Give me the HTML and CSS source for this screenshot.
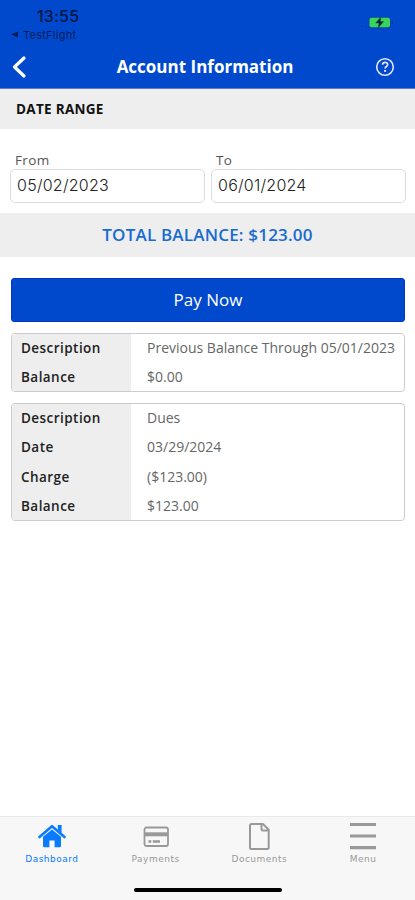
FILE: index.html
```html
<!DOCTYPE html>
<html lang="en">
<head>
<meta charset="utf-8">
<title>Account Information</title>
<link rel="stylesheet" href="styles.css">
</head>
<body>
<div class="app">
  <header class="header">
    <div class="status">
      <div class="status-left">
        <div class="clock">13:55</div>
        <div class="return-app"><svg width="7" height="7" viewBox="0 0 7 7"><path d="M0 3.500 7 .4v6.200z" fill="currentColor"/></svg><span>TestFlight</span></div>
      </div>
      <div class="status-right">
        <span class="signal"><i></i><i></i><i></i><i></i></span>
        <svg class="battery" width="26" height="13" viewBox="0 0 26 13"><rect x=".7" y=".7" width="22" height="11.400" rx="3.500" fill="none" stroke="#0647a5"/><rect x="1.500" y="1.700" width="20.500" height="9.500" rx="2" fill="#38d45c"/><path d="M24 4.500c1.700.5 1.700 3.500 0 4z" fill="#0638a0"/><path d="M12.800 1 7.700 7.100h3.300l-.8 4.900 5.400-6.500h-3.300z" fill="#001a40" stroke="#07652f" stroke-width=".5"/></svg>
      </div>
    </div>
    <div class="nav">
      <svg class="back" width="16" height="24" viewBox="0 0 16 24"><path d="M13 3 3.500 12l9.500 9" fill="none" stroke="#fff" stroke-width="3.200" stroke-linecap="round" stroke-linejoin="round"/></svg>
      <h1>Account Information</h1>
      <svg class="help" width="20" height="20" viewBox="0 0 20 20"><circle cx="10" cy="10" r="8.300" fill="none" stroke="#e2e6ff" stroke-width="1.600"/><path d="M7.500 7.700c.2-3.200 5.300-3 5.200-.1 0 1.900-2.600 1.900-2.600 4" fill="none" stroke="#e2e6ff" stroke-width="1.700"/><circle cx="10.100" cy="13.900" r="1.100" fill="#e2e6ff"/></svg>
    </div>
  </header>
  <main>
    <h2 class="section"><span>DATE RANGE</span></h2>
    <div class="dates">
      <div class="field"><div class="label">From</div><div class="input">05/02/2023</div></div>
      <div class="field"><div class="label">To</div><div class="input">06/01/2024</div></div>
    </div>
    <div class="total"><span>TOTAL BALANCE: $123.00</span></div>
    <div class="content">
      <div class="pay" role="button"><span>Pay Now</span></div>
      <dl class="card short">
        <dt>Description</dt><dd>Previous Balance Through 05/01/2023</dd>
        <dt>Balance</dt><dd>$0.00</dd>
      </dl>
      <dl class="card long">
        <dt>Description</dt><dd>Dues</dd>
        <dt>Date</dt><dd>03/29/2024</dd>
        <dt>Charge</dt><dd>($123.00)</dd>
        <dt>Balance</dt><dd>$123.00</dd>
      </dl>
    </div>
  </main>
  <footer class="tabs">
    <nav>
      <div class="tab active"><svg width="28" height="30" viewBox="0 0 28 30"><path d="M1.500 16 14 5.200 26.500 16" fill="none" stroke="currentColor" stroke-width="2.600" stroke-linecap="round" stroke-linejoin="round"/><path d="M19.800 4h3.800v8l-3.800-3.300zM5 15.800l9-7.200 9 7.200V25q0 1.200-1.200 1.200h-5.200v-6.700h-5.200v6.700H6.200Q5 26.200 5 25z" fill="currentColor"/></svg><span>Dashboard</span></div>
      <div class="tab"><svg width="28" height="30" viewBox="0 0 28 30"><rect x="2.500" y="6.500" width="23.500" height="18.500" rx="2" fill="none" stroke="currentColor" stroke-width="1.800"/><path d="M2 11.300h24v4H2z" fill="currentColor"/><path d="M6.500 20.500h2.800m1.500 0h7.200" fill="none" stroke="currentColor" stroke-width="2.400"/></svg><span>Payments</span></div>
      <div class="tab"><svg width="28" height="30" viewBox="0 0 28 30"><path d="M6.500 3H18l5.700 5.700V26.500q0 1.500-1.500 1.500H6.500Q5 28 5 26.500v-22Q5 3 6.500 3zM16.500 3v5q0 1.500 1.500 1.500h5.500" fill="none" stroke="currentColor" stroke-width="2" stroke-linejoin="round"/></svg><span>Documents</span></div>
      <div class="tab"><svg width="28" height="30" viewBox="0 0 28 30"><path d="M1 3.500h26M1 15h26M1 26.700h26" fill="none" stroke="currentColor" stroke-width="3.200"/></svg><span>Menu</span></div>
    </nav>
    <div class="home-bar"></div>
  </footer>
</div>
</body>
</html>
```

FILE: styles.css
```css
* { box-sizing: border-box; margin: 0; padding: 0; }
body { background: #fff; font-family: "Open Sans", sans-serif; }
svg { display: block; flex: none; }
.app { display: flex; flex-direction: column; height: 900px; width: 415px; overflow: hidden; }
.header { height: 89px; background: #0049cd; border-bottom: 1px solid #5b78cf; }
.status { height: 46px; display: flex; justify-content: space-between; padding: 7px 21px 0 11px; }
.clock { font: 500 16px/18px Inter, sans-serif; padding-left: 26px; color: #001643; letter-spacing: .2px; }
.return-app { display: flex; align-items: center; gap: 5px; height: 19px; font: 11px/18px Inter, sans-serif; letter-spacing: .25px; color: #001d60; }
.status-right { display: flex; gap: 5px; padding-top: 9px; }
.signal { display: flex; gap: 3px; padding-top: 9px; }
.signal i { width: 2px; height: 2px; border-radius: 1px; background: #0a3ba4; }
.nav { height: 42px; display: flex; align-items: center; justify-content: space-between; padding: 0 20px 0 11px; }
.nav h1 { font-size: 17px; line-height: 24px; color: #fff; margin-left: 8px; }
.section { height: 40px; padding-left: 16px; background: #eee; font-size: 13.500px; line-height: 40px; color: #111; letter-spacing: .3px; }
.dates { height: 84px; padding: 21px 9px 0 10px; display: grid; grid-template-columns: 195px 195px; gap: 6px; }
.label { height: 19px; padding-left: 5px; font-size: 13.500px; line-height: 20px; color: #555; letter-spacing: .35px; }
.input { height: 34px; padding-left: 6px; border: 1.500px solid #ddd; border-radius: 5px; font: 300 16px/31px Inter, sans-serif; color: #222; letter-spacing: .25px; }
.total { height: 44px; background: #eee; text-align: center; font-size: 17px; font-weight: 600; line-height: 44px; color: #186bd0; letter-spacing: .2px; }
.content { padding: 21px 10px 0 11px; display: flex; flex-direction: column; gap: 11px; }
.pay { height: 44px; border: 1px solid #0537c7; border-radius: 3px; background: #0049cd; color: #fff; text-align: center; font-size: 17px; line-height: 42px; }
.card { display: grid; grid-template-columns: 119px 1fr; grid-auto-rows: 29.400px; border: 1px solid #ccc; border-radius: 4px; overflow: hidden; font-size: 14px; line-height: 28px; }
.short { height: 59px; }
.long { height: 118px; }
.card dt { padding-left: 9px; background: #eee; font-weight: 600; font-size: 13.500px; color: #222; letter-spacing: .45px; }
.card dd { padding-left: 16px; color: #666; white-space: nowrap; }
.tabs { height: 84px; margin-top: auto; background: #f7f7f7; border-top: 1px solid #e8e8e8; }
.tabs nav { display: grid; grid-template-columns: repeat(4, 1fr); height: 71px; padding-top: 4px; }
.tab { display: flex; flex-direction: column; align-items: center; color: #999; font: 9px/14px "DejaVu Sans", sans-serif; letter-spacing: .5px; }
.tab span { margin-top: 1px; }
.active { color: #0a7aff; }
.home-bar { width: 148px; height: 4px; margin: 0 auto; border-radius: 2px; background: #000; }
```
